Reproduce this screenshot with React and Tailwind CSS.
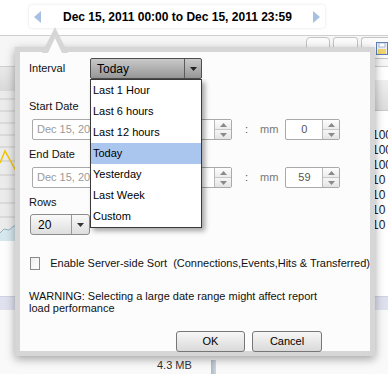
import React from 'react';

const SpinArrows = () => (
  <div className="flex flex-col w-[17px] h-full border-l border-[#b9b9b9]">
    <div className="flex-1 flex items-center justify-center bg-gradient-to-b from-[#fdfdfd] to-[#ececec] border-b border-[#c8c8c8]">
      <svg width="7" height="4" viewBox="0 0 7 4"><polygon points="0,4 3.5,0 7,4" fill="#8a8a8a" /></svg>
    </div>
    <div className="flex-1 flex items-center justify-center bg-gradient-to-b from-[#f6f6f6] to-[#e4e4e4]">
      <svg width="7" height="4" viewBox="0 0 7 4"><polygon points="0,0 7,0 3.5,4" fill="#8a8a8a" /></svg>
    </div>
  </div>
);

const Spinner = ({ value, w }) => (
  <div className={`flex h-[21px] ${w} border border-[#a9a9a9] bg-white rounded-[2px] overflow-hidden`}>
    <div className="flex-1 flex items-center justify-center text-[#555]">{value}</div>
    <SpinArrows />
  </div>
);

const DateRow = ({ date, mm }) => (
  <div className="flex items-center h-[21px] pl-[12px]">
    <div className="w-[110px] h-[21px] border border-[#a9a9a9] bg-white rounded-[2px] flex items-center pl-[4px] text-[#9a9a9a]">
      {date}
    </div>
    <div className="ml-[8px]">
      <Spinner value="0" w="w-[82px]" />
    </div>
    <span className="ml-[13px] text-[#555]">:</span>
    <span className="ml-[12px] text-[#777]">mm</span>
    <div className="ml-[7px]">
      <Spinner value={mm} w="w-[55px]" />
    </div>
  </div>
);

const items = ['Last 1 Hour', 'Last 6 hours', 'Last 12 hours', 'Today', 'Yesterday', 'Last Week', 'Custom'];

export default function App() {
  return (
    <div className="relative w-[388px] h-[374px] overflow-hidden bg-white text-[11px] text-[#111] font-['Liberation_Sans',Arial,sans-serif]">
      {/* header with date range */}
      <div className="h-[35px] pt-[5px] pl-[29px]">
        <div className="w-[296px] h-[23px] rounded-[3px] bg-white shadow-[0_0_3px_rgba(0,0,0,0.12)] flex items-center pl-[5px] pr-[5px]">
          <svg width="7" height="12" viewBox="0 0 7 12"><polygon points="7,0 0,6 7,12" fill="#a7c0e2" /></svg>
          <span className="ml-[22px] text-[12px] font-bold text-black whitespace-nowrap">Dec 15, 2011 00:00 to Dec 15, 2011 23:59</span>
          <div className="flex-1" />
          <svg width="7" height="12" viewBox="0 0 7 12"><polygon points="0,0 7,6 0,12" fill="#a7c0e2" /></svg>
        </div>
      </div>

      {/* toolbar */}
      <div className="h-[32px] border-t border-b border-[#cfcfcf] bg-[#f6f6f6] flex justify-end items-start pt-[1px] pr-0 gap-[3px]">
        <div className="w-[24px] h-[22px] rounded-[4px] border border-[#c4c4c4] bg-[#fbfbfb]" />
        <div className="w-[25px] h-[22px] rounded-[3px] border border-[#c4c4c4] bg-[#fbfbfb]" />
        <div className="w-[27px] h-[22px] rounded-l-[3px] border border-r-0 border-[#c4c4c4] bg-[#fbfbfb] flex items-center pl-[14px]">
          <svg width="12" height="13" viewBox="0 0 12 13">
            <rect x="0.5" y="0.5" width="11" height="12" fill="#e9eef7" stroke="#5d7fb5" />
            <rect x="2" y="7" width="8" height="5" fill="#f2d56b" />
            <rect x="3" y="1" width="6" height="4" fill="#ffffff" stroke="#7b93bd" strokeWidth="0.6" />
          </svg>
        </div>
      </div>

      {/* report body behind the popup */}
      <div className="flex h-[229px]">
        <div className="w-[20px] flex flex-col">
          <div className="h-[24px] bg-gradient-to-b from-[#e9e9e9] to-[#d9d9d9]" />
          <svg width="20" height="150" viewBox="0 0 20 150" className="bg-[#ebebeb]">
            {[8, 20, 32, 44, 56, 70, 84, 98, 112, 126].map((y) => (
              <line key={y} x1="0" y1={y} x2="20" y2={y} stroke="#c9c9c9" strokeWidth="1" />
            ))}
            <polyline points="0,72 5,60 16,80" fill="none" stroke="#f2c500" strokeWidth="1.5" />
            <path d="M0,142 L4,138 L9,139 L14,135 L20,134 L20,150 L0,150 Z" fill="#d6e7ee" />
            <polyline points="0,142 4,138 9,139 14,135 20,134" fill="none" stroke="#8fb3c6" strokeWidth="1" />
          </svg>
          <div className="flex-1 bg-[#fdfdfd]" />
        </div>
        <div className="flex-1" />
        <div className="w-[16px] flex flex-col">
          <div className="h-[13px] bg-white" />
          <div className="h-[31px] bg-gradient-to-b from-[#efefef] to-[#dcdcdc] border-b border-[#c9c9c9]" />
          <div className="pt-[17px] flex flex-col items-start leading-[15px] text-[12px] text-[#222] whitespace-nowrap">
            <span>1000</span>
            <span>1000</span>
            <span>1000</span>
            <span>10</span>
            <span>10</span>
            <span>10</span>
            <span>10</span>
          </div>
        </div>
      </div>
      <div className="h-[14px] bg-[#dfe1ef] border-t border-[#cfd2e4]" />
      <div className="h-[64px] bg-[#f9f9f9] flex items-end">
        <span className="ml-[157px] mb-[1px] text-[#333]">4.3 MB</span>
        <div className="ml-[19px] w-[5px] h-[14px] bg-gradient-to-r from-[#aeb8c8] to-[#cdd4df]" />
      </div>

      {/* popup callout */}
      <svg width="26" height="26" viewBox="0 0 26 26" className="absolute left-[42px] top-[27px] z-20">
        <polygon points="0,26 13,0 26,26" fill="#d6d6d6" />
        <polygon points="6,26 13,11 20,26" fill="#fcfcfc" />
      </svg>

      {/* popup */}
      <div className="absolute left-[15px] top-[47px] z-10 w-[360px] h-[309px] border-[5px] border-[#d6d6d6] bg-[#fcfcfc] shadow-[0_3px_9px_rgba(0,0,0,0.35)]">
        <div className="relative h-full">
          <div className="flex items-center pt-[6px] pl-[9px]">
            <span className="w-[61px]">Interval</span>
            <div className="w-[112px] h-[21px] flex rounded-[2px] border border-[#4d4d4d] bg-gradient-to-b from-[#c9c9c9] to-[#979797]">
              <div className="flex-1 flex items-center pl-[6px] text-[12px] text-black">Today</div>
              <div className="w-[17px] flex items-center justify-center border-l border-[#5a5a5a]">
                <svg width="7" height="4" viewBox="0 0 7 4"><polygon points="0,0 7,0 3.5,4" fill="#222" /></svg>
              </div>
            </div>
          </div>

          <div className="pl-[9px] mt-[21px] leading-[13px]">Start Date</div>
          <div className="mt-[6px]">
            <DateRow date="Dec 15, 2011" mm="0" />
          </div>

          <div className="pl-[9px] mt-[8px] leading-[13px]">End Date</div>
          <div className="mt-[6px]">
            <DateRow date="Dec 15, 2011" mm="59" />
          </div>

          <div className="pl-[9px] mt-[8px] leading-[13px]">Rows</div>
          <div className="pl-[10px] mt-[5px]">
            <div className="w-[60px] h-[21px] flex rounded-[3px] border border-[#8c8c8c] bg-gradient-to-b from-[#fafafa] to-[#dedede]">
              <div className="flex-1 flex items-center pl-[7px] text-[12px] text-black">20</div>
              <div className="w-[18px] flex items-center justify-center border-l border-[#9a9a9a]">
                <svg width="7" height="4" viewBox="0 0 7 4"><polygon points="0,0 7,0 3.5,4" fill="#333" /></svg>
              </div>
            </div>
          </div>

          <div className="flex items-center pl-[10px] mt-[20px]">
            <div className="w-[13px] h-[13px] border border-[#8a8a8a] bg-gradient-to-br from-[#eeeeee] to-[#ffffff]" />
            <span className="ml-[10px] whitespace-pre">Enable Server-side Sort  (Connections,Events,Hits &amp; Transferred)</span>
          </div>

          <div className="pl-[9px] mt-[18px] leading-[12px]">
            WARNING: Selecting a large date range might affect report
            <br />
            load performance
          </div>

          <div className="flex pl-[156px] gap-[7px] mt-[17px]">
            <button className="w-[69px] h-[21px] rounded-[3px] border border-[#777] bg-gradient-to-b from-[#f6f6f6] to-[#dadada] text-[11px] text-black">OK</button>
            <button className="w-[70px] h-[21px] rounded-[3px] border border-[#777] bg-gradient-to-b from-[#f6f6f6] to-[#dadada] text-[11px] text-black">Cancel</button>
          </div>

          {/* open interval list */}
          <div className="absolute left-[70px] top-[27px] w-[112px] border border-[#3a3a3a] bg-white shadow-[3px_3px_5px_rgba(0,0,0,0.35)]">
            {items.map((it) => (
              <div
                key={it}
                className={`h-[21px] flex items-center pl-[2px] text-[11px] text-black ${it === 'Today' ? 'bg-[#aac6ee]' : ''}`}
              >
                {it}
              </div>
            ))}
          </div>
        </div>
      </div>
    </div>
  );
}
